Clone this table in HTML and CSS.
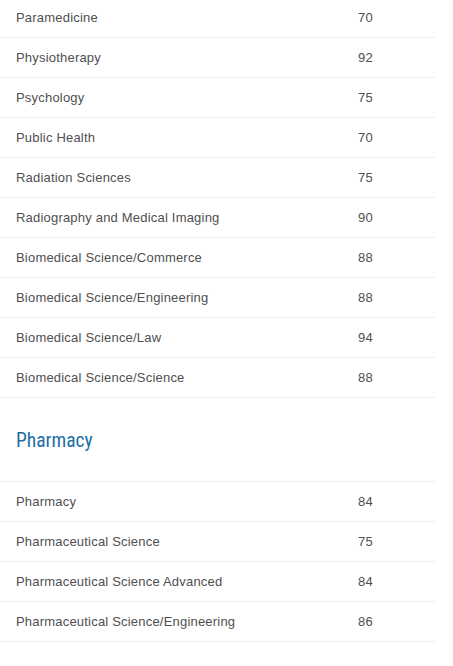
FILE: index.html
```html
<!DOCTYPE html>
<html>
<head>
<meta charset="utf-8">
<link rel="stylesheet" href="styles.css">
</head>
<body>
<div class="page">
  <div class="table first">
    <div class="row"><span class="name">Paramedicine</span><span class="score">70</span></div>
    <div class="row"><span class="name">Physiotherapy</span><span class="score">92</span></div>
    <div class="row"><span class="name">Psychology</span><span class="score">75</span></div>
    <div class="row"><span class="name">Public Health</span><span class="score">70</span></div>
    <div class="row"><span class="name">Radiation Sciences</span><span class="score">75</span></div>
    <div class="row"><span class="name">Radiography and Medical Imaging</span><span class="score">90</span></div>
    <div class="row"><span class="name">Biomedical Science/Commerce</span><span class="score">88</span></div>
    <div class="row"><span class="name">Biomedical Science/Engineering</span><span class="score">88</span></div>
    <div class="row"><span class="name">Biomedical Science/Law</span><span class="score">94</span></div>
    <div class="row"><span class="name">Biomedical Science/Science</span><span class="score">88</span></div>
  </div>
  <h2 class="section-title"><span>Pharmacy</span></h2>
  <div class="table">
    <div class="row"><span class="name">Pharmacy</span><span class="score">84</span></div>
    <div class="row"><span class="name">Pharmaceutical Science</span><span class="score">75</span></div>
    <div class="row"><span class="name">Pharmaceutical Science Advanced</span><span class="score">84</span></div>
    <div class="row"><span class="name">Pharmaceutical Science/Engineering</span><span class="score">86</span></div>
  </div>
</div>
</body>
</html>
```
FILE: styles.css
```css
html, body {
  margin: 0;
  padding: 0;
  background: #ffffff;
}
.page {
  width: 435px;
  margin-top: -2px;
  font-family: "Liberation Sans", Arial, sans-serif;
  color: #4f4f4f;
}
.table {
  border-top: 1px solid #efefef;
}
.table.first {
  border-top: none;
}
.row {
  display: grid;
  grid-template-columns: 342px 1fr;
  align-items: center;
  height: 39px;
  border-bottom: 1px solid #efefef;
  padding-left: 16px;
  font-size: 13px;
  letter-spacing: 0.2px;
}
.section-title {
  margin: 0;
  height: 83px;
  box-sizing: border-box;
  padding-top: 2px;
  display: flex;
  align-items: center;
  padding-left: 16px;
  font-family: Roboto, sans-serif;
  font-weight: 400;
  font-size: 19.5px;
  color: #1d6ea3;
}
.section-title span {
  display: inline-block;
  font-stretch: 78%;
}
```
